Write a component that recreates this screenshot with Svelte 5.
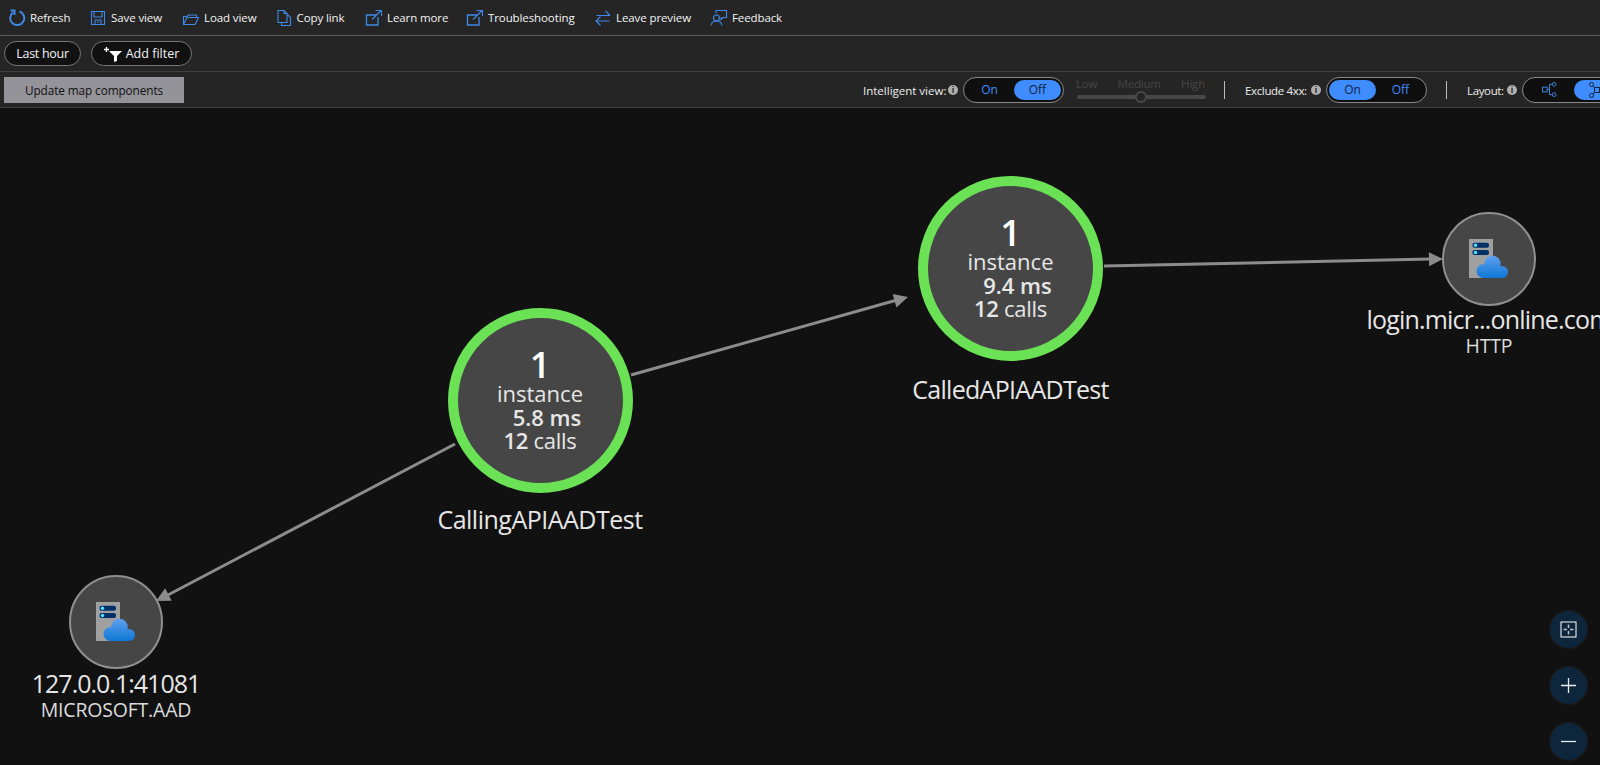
<script>
  const tools = [
    { label: 'Refresh', icon: 'refresh', w: 81 },
    { label: 'Save view', icon: 'save', w: 93 },
    { label: 'Load view', icon: 'load', w: 92.5 },
    { label: 'Copy link', icon: 'copy', w: 90.5 },
    { label: 'Learn more', icon: 'ext', w: 101 },
    { label: 'Troubleshooting', icon: 'ext', w: 128 },
    { label: 'Leave preview', icon: 'swap', w: 116 },
    { label: 'Feedback', icon: 'feedback', w: 80 }
  ];
  const services = [
    { x: 540, y: 400, inst: '5.8 ms', name: 'CallingAPIAADTest', sp: -0.5, gap: 11 },
    { x: 1010.5, y: 268.5, inst: '9.4 ms', name: 'CalledAPIAADTest', sp: -0.7, gap: 13 }
  ];
  const externals = [
    { x: 1489, y: 258.5, name: 'login.micr...online.com', kind: 'HTTP', sp: -0.8, gap: -2 },
    { x: 116, y: 621.5, name: '127.0.0.1:41081', kind: 'MICROSOFT.AAD', sp: -1, gap: -1 }
  ];
  const edges = [
    { x1: 631, y1: 375, x2: 897, y2: 300 },
    { x1: 1104, y1: 266, x2: 1431, y2: 259 },
    { x1: 455, y1: 444, x2: 166, y2: 596 }
  ];
  const tips = [
    { x: 908, y: 297, a: -15.7 },
    { x: 1443, y: 259, a: -1.2 },
    { x: 156, y: 601, a: 152.3 }
  ];
</script>

{#snippet info()}
  <span class="info">i</span>
{/snippet}

{#snippet toggle(on)}
  <div class="toggle">
    <span class="opt" class:sel={on}>On</span>
    <span class="opt" class:sel={!on}>Off</span>
  </div>
{/snippet}

{#snippet cloud()}
  <svg class="cloud" width="42" height="42" viewBox="0 0 42 42">
    <defs>
      <linearGradient id="cl" gradientUnits="userSpaceOnUse" x1="0" y1="18" x2="0" y2="40">
        <stop offset="0" stop-color="#5ea0ef" />
        <stop offset="1" stop-color="#0f78d4" />
      </linearGradient>
    </defs>
    <rect x="1" y="1" width="24" height="39" fill="#a0a0a0" />
    <rect x="4.500" y="4.700" width="16.500" height="5" rx="2" fill="#003067" />
    <rect x="4.500" y="12" width="16.500" height="5" rx="2" fill="#003067" />
    <circle cx="7.500" cy="7.200" r="1.700" fill="#50e6ff" />
    <circle cx="7.500" cy="14.500" r="1.700" fill="#50e6ff" />
    <g fill="url(#cl)">
      <circle cx="15.500" cy="33" r="7" />
      <circle cx="24.500" cy="26" r="8.300" />
      <circle cx="34" cy="34" r="6" />
      <rect x="15" y="30" width="19" height="10" />
    </g>
  </svg>
{/snippet}

{#snippet icon(name)}
  <svg class="ti" width="18" height="18" viewBox="0 0 18 18" fill="none" stroke="#3f8ae8" stroke-width="1.1">
    {#if name === 'refresh'}
      <path d="M5 3.500A7 7 0 1 0 11.500 2.500" stroke-width="2" />
      <path d="M2.500 1.500H6.500V6" stroke-width="2" />
    {:else if name === 'save'}
      <path d="M2.500 2.500H15.500V15.500H2.500Z" />
      <path d="M5 2.500V8H13V2.500M6 15.500V11H12V15.500M8 13H10" />
    {:else if name === 'load'}
      <path d="M1.500 15.500V7.500H5L6.500 6H14.500V8.500" />
      <path d="M1.500 15.500H13L16.500 8.500H5L1.500 15.500Z" />
    {:else if name === 'copy'}
      <path d="M3 1.500H9L12 4.500V13.500H3Z" />
      <path d="M9 1.500V4.500H12M12 6H13L15.500 8.500V16.500H6.500V13.500" />
    {:else if name === 'ext'}
      <path d="M11 6H1.500V16H13V8" stroke-width="1.300" />
      <path d="M7 10.500L16 1.500M10.500 1.500H16.500V7" stroke-width="1.100" />
    {:else if name === 'swap'}
      <path d="M2.500 6.500H16M11.500 2L16 6.500M15.500 12H2M6.500 7.500L2 12L6.500 16.500" />
    {:else}
      <path d="M6 4.500V1.500H16.500V8.500H13L11 10.500V8.500" />
      <circle cx="6.500" cy="9" r="3" />
      <path d="M1 16.500C1.500 13.500 3.500 12 6.500 12S11.500 13.500 12 16.500" />
    {/if}
  </svg>
{/snippet}

<div class="page">
  <div class="bar top">
    {#each tools as t}
      <div class="tool" style="width:{t.w}px">
        {@render icon(t.icon)}
        <span>{t.label}</span>
      </div>
    {/each}
  </div>

  <div class="bar filters">
    <div class="pill time">Last hour</div>
    <div class="pill add">
      <svg width="19" height="16" viewBox="0 0 19 16">
        <path d="M2.500 1V6M0 3.500H5" stroke="#fff" stroke-width="1.300" fill="none" />
        <path d="M5 5H18L13 10V15L10 16V10Z" fill="#fff" />
      </svg>
      <span>Add filter</span>
    </div>
  </div>

  <div class="bar controls">
    <button class="update">Update map components</button>
    <div class="group g1">
      <span class="lab iv">Intelligent view:</span>{@render info()}
      {@render toggle(false)}
      <div class="slider">
        <div class="levels"><span>Low</span><span>Medium</span><span>High</span></div>
        <div class="track"><i></i></div>
      </div>
      <div class="sep"></div>
      <span class="lab ex">Exclude 4xx:</span>{@render info()}
      {@render toggle(true)}
      <div class="sep s2"></div>
      <span class="lab ly">Layout:</span>{@render info()}
      <div class="toggle layout">
        <span class="opt">
          <svg class="lay1" width="15" height="15" viewBox="0 0 16 16" fill="none" stroke="#3f8ae8">
            <rect x="0.500" y="5.500" width="5" height="5" />
            <path d="M5.500 8H8M8 2.500V13.500H11M8 2.500H11" />
            <circle cx="13" cy="2.500" r="2" /><circle cx="13" cy="13.500" r="2" />
          </svg>
        </span>
        <span class="opt sel">
          <svg width="16" height="16" viewBox="0 0 16 16" fill="none" stroke="#13243b">
            <rect x="5.500" y="5.500" width="5" height="5" />
            <circle cx="2.500" cy="2.500" r="2" /><circle cx="13.500" cy="2.500" r="2" />
            <circle cx="2.500" cy="13.500" r="2" /><circle cx="13.500" cy="13.500" r="2" />
            <path d="M4 4L5.500 5.500M12 4L10.500 5.500M4 12L5.500 10.500M12 12L10.500 10.500" />
          </svg>
        </span>
      </div>
    </div>
  </div>

  <div class="canvas">
    <svg class="edges" width="1600" height="765" viewBox="0 0 1600 765">
      {#each edges as e}
        <line x1={e.x1} y1={e.y1} x2={e.x2} y2={e.y2} stroke="#8c8c8c" stroke-width="3" />
      {/each}
      {#each tips as t}
        <path d="M0 0L-14 -7L-14 7Z" fill="#8c8c8c" transform="translate({t.x} {t.y}) rotate({t.a})" />
      {/each}
    </svg>

    {#each services as s}
      <div class="node svc" style="left:{s.x}px;top:{s.y}px">
        <div class="disc">
          <b class="count">1</b>
          <span class="ln">instance</span>
          <b class="ln dur">{s.inst}</b>
          <span class="ln calls"><b>12</b> calls</span>
        </div>
        <div class="name" style="letter-spacing:{s.sp}px;margin-top:{s.gap}px">{s.name}</div>
      </div>
    {/each}

    {#each externals as n}
      <div class="node ext" style="left:{n.x}px;top:{n.y}px">
        <div class="disc small">{@render cloud()}</div>
        <div class="name" style="letter-spacing:{n.sp}px;margin-top:{n.gap}px">{n.name}</div>
        <div class="kind">{n.kind}</div>
      </div>
    {/each}

    <div class="zoom">
      <div class="zb">
        <svg width="17" height="17" viewBox="0 0 17 17" fill="none">
          <rect x="1" y="1" width="15" height="15" stroke="#fff" />
          <path d="M8.500 3.500V7M8.500 10V13.500M3.500 8.500H7M10 8.500H13.500" stroke="#b9c2cb" stroke-width="1.500" />
        </svg>
      </div>
      <div class="zb">
        <svg width="17" height="17" viewBox="0 0 17 17"><path d="M8.500 1V16M1 8.500H16" stroke="#e8ecef" stroke-width="1.300" /></svg>
      </div>
      <div class="zb">
        <svg width="17" height="17" viewBox="0 0 17 17"><path d="M1 8.500H16" stroke="#e8ecef" stroke-width="1.300" /></svg>
      </div>
    </div>
  </div>
</div>

<style>
  :global(body) { margin: 0; background: #111; }
  .page {
    width: 1600px; height: 765px; overflow: hidden; display: flex; flex-direction: column;
    font-family: "Open Sans", "Noto Sans", sans-serif; color: #eee; background: #111;
  }
  .bar { background: #252525; display: flex; align-items: center; flex: none; box-sizing: border-box; }
  .top { height: 36px; border-bottom: 1px solid #5c5c5c; padding-left: 8px; }
  .filters { height: 36px; border-bottom: 1px solid #404040; padding-left: 4px; gap: 10px; }
  .controls { height: 36px; border-bottom: 1px solid #404040; padding-left: 4px; position: relative; }
  .tool { display: flex; align-items: center; gap: 4px; font-size: 11.500px; letter-spacing: -0.100px; color: #f4f4f4; flex: none; white-space: nowrap; }
  .ti { flex: none; }
  .pill {
    height: 25px; border: 1px solid #777; border-radius: 13px; background: #111; box-sizing: border-box;
    display: flex; align-items: center; justify-content: center; font-size: 12.500px; color: #f4f4f4;
  }
  .time { width: 77px; letter-spacing: -0.300px; }
  .add { width: 101px; gap: 3px; }
  .update {
    width: 180px; height: 26px; background: #949399; border: 0; padding: 0; color: #111;
    font: 11.800px "Open Sans", sans-serif; letter-spacing: -0.100px; flex: none;
  }
  .group { display: flex; align-items: center; flex: none; margin-left: 679px; }
  .lab { font-size: 11.500px; letter-spacing: -0.350px; color: #eee; white-space: nowrap; padding-top: 1px; }
  .lab.iv { width: 85px; letter-spacing: 0; }
  .lab.ex { width: 66px; margin-left: 20px; }
  .lab.ly { width: 40px; margin-left: 20px; }
  .info {
    width: 10px; height: 10px; border-radius: 50%; background: #b0b0b0; color: #252525; font-size: 9px; font-weight: 700;
    line-height: 10px; text-align: center; flex: none; margin-right: 5px; font-family: "Liberation Sans", sans-serif;
  }
  .toggle {
    width: 101px; height: 26px; border: 1px solid #8a8a8a; border-radius: 13px; background: #0f0f0f; box-sizing: border-box;
    display: flex; align-items: center; padding: 0 2px; flex: none; justify-content: space-between;
  }
  .opt {
    width: 47px; height: 20px; border-radius: 10px; display: flex; align-items: center; justify-content: center;
    font-size: 12px; color: #3f8cff;
  }
  .opt.sel { background: #3f8cff; color: #12233b; }
  .layout .opt { width: 46px; }
  .lay1 { margin-left: 2px; }
  .slider { width: 129px; margin-left: 13px; flex: none; }
  .levels { display: flex; justify-content: space-between; font-size: 11.500px; color: #454545; line-height: 14px; letter-spacing: -0.200px; margin: -4px 1px 0 -1px; }
  .track { height: 4px; border-radius: 2px; background: #484848; position: relative; margin-top: 4px; width: 129px; }
  .track i { position: absolute; left: 58px; top: -4px; width: 8px; height: 8px; border: 2px solid #484848; background: #252525; border-radius: 50%; }
  .sep { width: 1px; height: 18px; background: #bbb; margin-left: 18px; flex: none; }
  .s2 { margin-left: 19px; }
  .canvas { flex: 1; position: relative; background: #111; }
  .edges { position: absolute; left: 0; top: -108px; }
  .node { position: absolute; width: 0; height: 0; display: flex; flex-direction: column; align-items: center; margin-top: -108px; }
  .disc {
    flex: none; border-radius: 50%; background: #464646; box-sizing: border-box; display: flex; flex-direction: column; align-items: center;
  }
  .svc .disc {
    width: 185px; height: 185px; border: 10px solid #6be155; margin-top: -92.500px; padding-top: 30px; color: #e6e6e6;
  }
  .count { font-size: 36px; line-height: 33px; font-weight: 600; color: #fff; }
  .ln { font-size: 22px; line-height: 24px; white-space: nowrap; font-weight: 400; }
  .ln b, .dur { font-weight: 600; }
  .dur { padding-left: 14px; }
  .calls { letter-spacing: -0.300px; margin-top: -1px; }
  .small { width: 94px; height: 94px; border: 2px solid #909090; margin-top: -47px; justify-content: center; }
  .name { font-size: 25px; line-height: 30px; white-space: nowrap; color: #e6e6e6; flex: none; }
  .kind { font-size: 19.500px; line-height: 24px; white-space: nowrap; color: #dcdcdc; letter-spacing: -0.200px; flex: none; }
  .zoom { position: absolute; left: 1550px; top: 503px; display: flex; flex-direction: column; gap: 19px; }
  .zb { width: 37px; height: 37px; border-radius: 50%; background: #0e263b; display: flex; align-items: center; justify-content: center; box-shadow: 0 0 0 1px #1c1c1c; }
</style>
